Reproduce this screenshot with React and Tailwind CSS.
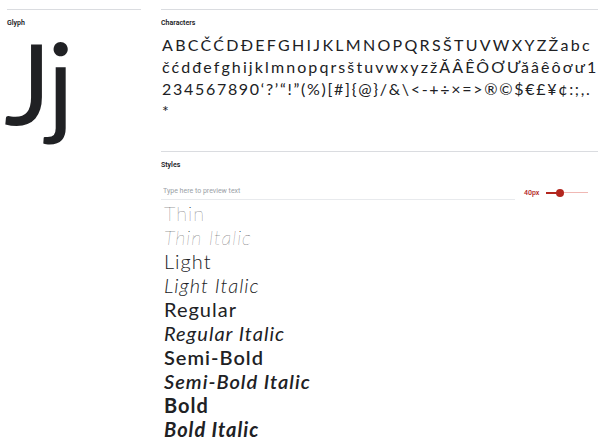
import React, { useState } from 'react';

const rows = [
  { text: 'ABCČĆDĐEFGHIJKLMNOPQRSŠTUVWXYZŽabc', cls: 'tracking-[2.3px]' },
  { text: 'čćdđefghijklmnopqrsštuvwxyzžĂÂÊÔƠƯăâêôơư1', cls: 'tracking-[2.1px]' },
  { text: '234567890‘?’“!”(%)[#]{@}/&\\<-+÷×=>®©$€£¥¢:;,.', cls: 'tracking-[1.7px]' },
  { text: '*', cls: '' },
];

const styles = [
  { name: 'Thin', cls: 'font-thin' },
  { name: 'Thin Italic', cls: 'font-thin italic' },
  { name: 'Light', cls: 'font-light' },
  { name: 'Light Italic', cls: 'font-light italic' },
  { name: 'Regular', cls: 'font-normal' },
  { name: 'Regular Italic', cls: 'font-normal italic' },
  { name: 'Semi-Bold', cls: 'font-semibold' },
  { name: 'Semi-Bold Italic', cls: 'font-semibold italic' },
  { name: 'Bold', cls: 'font-bold' },
  { name: 'Bold Italic', cls: 'font-bold italic' },
];

const Label = ({ children }) => (
  <div className="text-[7px] leading-[8px] font-semibold text-[#202124] mt-[9px] font-['Roboto',sans-serif]">{children}</div>
);

export default function App() {
  const [preview, setPreview] = useState('');

  return (
    <div className="w-[600px] h-[446px] bg-white overflow-hidden font-['Lato',sans-serif] text-[#202124]">
      <div className="flex pl-[7px] pr-[8px] pt-[9px] gap-[20px]">
        {/* Glyph */}
        <div className="w-[134px] shrink-0">
          <div className="border-t border-[#dadce0]" />
          <Label>Glyph</Label>
          <div className="text-[112px] leading-[90px] font-normal tracking-[-3px] mt-[10px] -ml-[3px]">Jj</div>
        </div>

        {/* Characters + Styles */}
        <div className="flex-1">
          <div className="border-t border-[#dadce0]" />
          <Label>Characters</Label>
          <div className="mt-[7px] text-[16px] leading-[22px] pl-[1px]">
            {rows.map((r) => (
              <div key={r.text} className={`whitespace-nowrap ${r.cls}`}>{r.text}</div>
            ))}
          </div>

          <div className="border-t border-[#dadce0] mt-[29px]" />
          <Label>Styles</Label>

          <div className="flex items-center mt-[17px]">
            <input
              value={preview}
              onChange={(e) => setPreview(e.target.value)}
              placeholder="Type here to preview text"
              className="w-[354px] border-b border-[#e8eaed] text-[7px] pb-[2px] pl-[2px] outline-none placeholder:text-[#9aa0a6] font-['Roboto',sans-serif]"
            />
            <span className="ml-[9px] text-[7px] font-medium text-[#b3261e] font-['Roboto',sans-serif]">40px</span>
            <div className="ml-[7px] relative w-[42px] h-[8px] flex items-center">
              <div className="h-[2px] w-[14px] bg-[#b3261e]" />
              <div className="h-[1px] flex-1 bg-[#f0b8b4]" />
              <div className="absolute left-[10px] top-0 w-[8px] h-[8px] rounded-full bg-[#b3261e]" />
            </div>
          </div>

          <div className="mt-[1px] pl-[3px]">
            {styles.map((s) => (
              <div key={s.name} className={`text-[20px] leading-[24px] tracking-[1px] whitespace-nowrap ${s.cls}`}>
                {preview || s.name}
              </div>
            ))}
          </div>
        </div>
      </div>
    </div>
  );
}
